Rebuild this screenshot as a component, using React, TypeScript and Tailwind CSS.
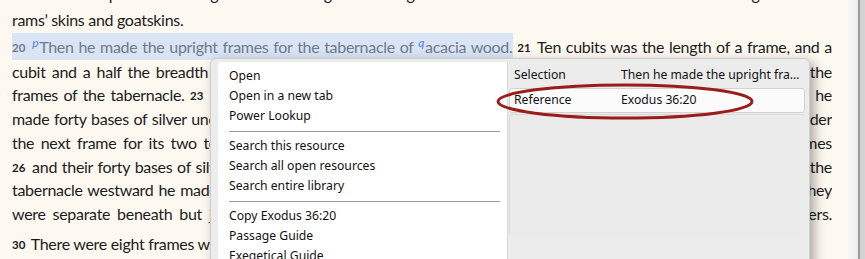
import React from "react";

const body = { fontFamily: "Lato, 'Noto Sans', sans-serif" };
const ui = { fontFamily: "'Noto Sans', 'DejaVu Sans', sans-serif" };

function V({ n }: { n: string }) {
  return <sup className="relative top-[-1px] mr-[2px] text-[11.5px] font-bold tracking-normal">{n}</sup>;
}

function Fn({ c }: { c: string }) {
  return <sup className="mr-[1px] text-[12px] italic text-[#5b7fd6]">{c}</sup>;
}

function Line({ h, justify = true, children }: { h: number; justify?: boolean; children: React.ReactNode }) {
  return (
    <div
      className={`overflow-hidden ${justify ? "text-justify [text-align-last:justify]" : ""}`}
      style={{ height: h, lineHeight: `${h}px` }}
    >
      {children}
    </div>
  );
}

const menu = [
  ["Open", "Open in a new tab", "Power Lookup"],
  ["Search this resource", "Search all open resources", "Search entire library"],
  ["Copy Exodus 36:20", "Passage Guide", "Exegetical Guide"],
];

export default function App() {
  return (
    <div className="relative flex h-[259px] w-[865px] overflow-hidden bg-[#fdf8f0]">
      <div className="flex-1 pl-[12px] pr-[16px] text-[16px] tracking-[-0.3px] text-[#1c1c1c]" style={body}>
        <div className="-mt-[19px]">
          <Line h={26}>
            bronze to couple the tent together that it might be a single whole. <V n="19" /> And he made for the tent a covering of tanned
          </Line>
          <Line h={26} justify={false}>
            rams’ skins and goatskins.
          </Line>
          <Line h={27}>
            <span className="bg-[#d9e4f5] py-[4px] text-[#707a8c]">
              <V n="20" /> <Fn c="p" />
              Then he made the upright frames for the tabernacle of <Fn c="q" />
              acacia wood.
            </span>{" "}
            <V n="21" /> Ten cubits was the length of a frame, and a
          </Line>
          <Line h={23}>
            cubit and a half the breadth of each frame. <V n="22" /> Each frame had two tenons for fitting together. He did this for all the
          </Line>
          <Line h={24}>
            frames of the tabernacle. <V n="23" /> The frames for the tabernacle he made thus: twenty frames for the south side. <V n="24" /> And he
          </Line>
          <Line h={24}>
            made forty bases of silver under the twenty frames, two bases under one frame for its two tenons, and two bases under
          </Line>
          <Line h={24}>
            the next frame for its two tenons. <V n="25" /> For the second side of the tabernacle, the north side, he made twenty frames
          </Line>
          <Line h={23}>
            <V n="26" /> and their forty bases of silver, two bases under one frame and two bases under the next frame. <V n="27" /> For the rear of the
          </Line>
          <Line h={24}>
            tabernacle westward he made six frames. <V n="28" /> He made two frames for corners of the tabernacle in the rear. <V n="29" /> And they
          </Line>
          <Line h={24}>
            were separate beneath but joined at the top, at the first ring. He made two of them this way for the two corners.
          </Line>
          <div className="mt-[6px]">
            <Line h={24} justify={false}>
              <V n="30" /> There were eight frames with their bases of silver: sixteen bases, under every frame two bases.
            </Line>
          </div>
        </div>
      </div>

      <div className="w-[10px] bg-gradient-to-r from-[#f7f7f7] to-[#eeeeee]" />
      <div className="w-[2px] bg-[#9a9a9a]" />
      <div className="w-[5px] bg-[#d4d4d4]" />

      <div
        className="absolute left-[210px] top-[58px] flex h-[220px] w-[600px] rounded-t-[6px] border border-[#cfcfcf] bg-[#ececec] shadow-[4px_4px_12px_rgba(0,0,0,0.35)]"
        style={ui}
      >
        <div className="ml-[7px] mt-[3px] w-[290px] rounded-tl-[3px] border-r border-[#d8d8d8] bg-white pt-[4px] text-[12.2px] text-[#111]">
          {menu.map((group, gi) => (
            <div key={gi}>
              {gi > 0 && <div className="mb-[4px] ml-[11px] mr-[7px] mt-[5px] h-px bg-[#9a9a9a]" />}
              {group.map((item) => (
                <div key={item} className="h-[20px] pl-[11px] leading-[20px]">
                  {item}
                </div>
              ))}
            </div>
          ))}
        </div>
        <div className="flex-1 pt-[3px] text-[12.2px] text-[#111]">
          <div className="flex h-[26px] items-center pl-[6px]">
            <div className="w-[107px]">Selection</div>
            <div>Then he made the upright fra…</div>
          </div>
          <div className="ml-[1px] mr-[4px] flex h-[25px] items-center rounded-[3px] border border-[#d2d2d2] bg-[#fbfbfb] pl-[4px]">
            <div className="w-[107px]">Reference</div>
            <div>Exodus 36:20</div>
          </div>
          <div className="ml-[1px] mr-[4px] mt-[1px] h-[120px] rounded-t-[3px] border-l border-t border-[#dadada] bg-[#ebebeb]" />
        </div>
      </div>

      <svg className="pointer-events-none absolute left-0 top-0" width="865" height="259">
        <ellipse cx="625" cy="101.5" rx="127" ry="16.5" fill="none" stroke="#9c1c1c" strokeWidth="3" />
      </svg>
    </div>
  );
}
